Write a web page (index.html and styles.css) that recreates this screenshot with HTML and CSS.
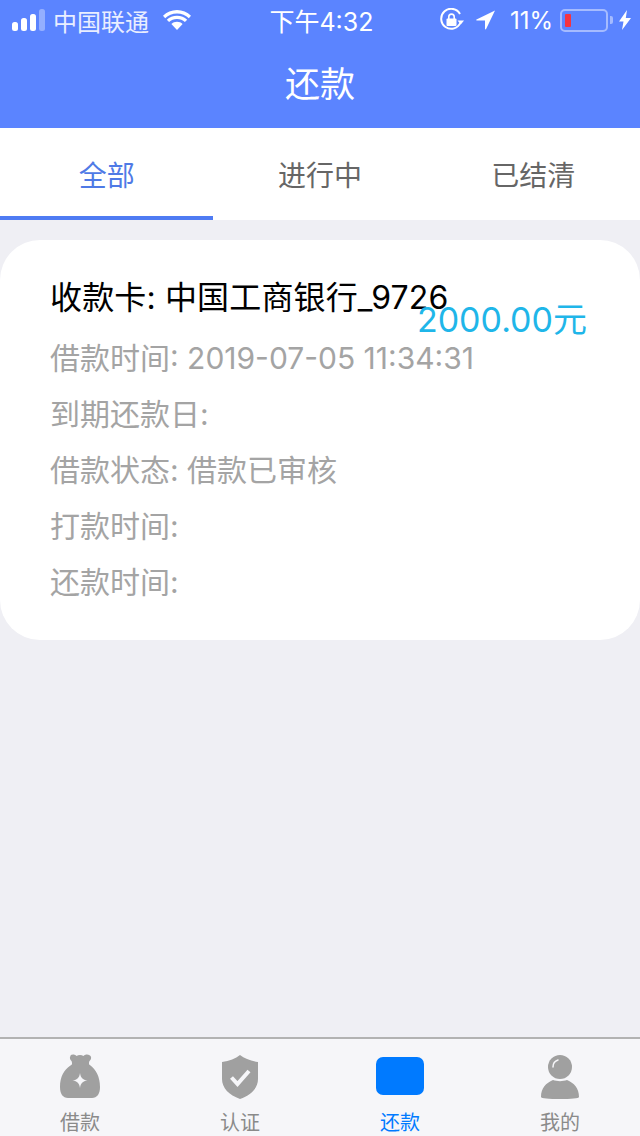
FILE: index.html
```html
<!DOCTYPE html>
<html lang="zh-CN">
<head>
  <meta charset="UTF-8" />
  <meta name="viewport" content="width=device-width, initial-scale=1" />
  <title>还款</title>
  <link rel="stylesheet" href="styles.css">
</head>
<body>
  <div class="page">
    <header class="header">
      <div class="status">
        <div class="status-side">
          <svg class="signal" width="34" height="22" viewBox="0 0 34 22">
            <rect x="0" y="13" width="6" height="9" rx="2.500" fill="#fff"/>
            <rect x="9" y="9" width="6" height="13" rx="2.500" fill="#fff"/>
            <rect x="18" y="5" width="6" height="17" rx="2.500" fill="#fff"/>
            <rect x="27" y="0" width="6" height="22" rx="2.500" fill="#fff" fill-opacity=".35"/>
          </svg>
          <span class="carrier">中国联通</span>
          <svg class="wifi" width="28" height="22" viewBox="0 0 28 22">
            <path d="M14 4.500c-4.600 0-8.700 1.800-11.800 4.700L0 6.800C3.700 3.200 8.600 1 14 1s10.300 2.200 14 5.800l-2.200 2.400C22.700 6.300 18.600 4.500 14 4.500z" fill="#fff"/>
            <path d="M14 10c-3.100 0-5.800 1.200-7.900 3.100l-2.300-2.400C6.500 8.100 10 6.700 14 6.700s7.500 1.400 10.200 4l-2.300 2.400C19.800 11.200 17.100 10 14 10z" fill="#fff"/>
            <path d="M14 12.800c2.200 0 4.100.8 5.600 2.200L14 21l-5.600-6c1.500-1.400 3.400-2.200 5.600-2.200z" fill="#fff"/>
          </svg>
        </div>
        <div class="status-time">下午4:32</div>
        <div class="status-side status-right">
          <svg class="lock" width="24" height="24" viewBox="0 0 24 24">
            <path d="M20.500 14.500A10 10 0 1 1 20 6" fill="none" stroke="#fff" stroke-width="2"/>
            <path d="M17.500 12.500h6.500l-3.200 4z" fill="#fff"/>
            <rect x="6.500" y="10.500" width="10" height="7.500" rx="1" fill="#fff"/>
            <path d="M8.800 11V8.800a2.700 2.700 0 0 1 5.400 0V11" fill="none" stroke="#fff" stroke-width="1.600"/>
          </svg>
          <svg class="arrow" width="20" height="20" viewBox="0 0 20 20">
            <path d="M19 0.500 0.500 9.500c-.6.400-.4 1.100.3 1.100H9v8.200c0 .7.800.9 1.100.3z" fill="#fff"/>
          </svg>
          <span class="battery-text">11%</span>
          <div class="battery">
            <div class="battery-body"><div class="battery-level"></div></div>
            <div class="battery-cap"></div>
          </div>
          <svg class="bolt" width="12" height="20" viewBox="0 0 12 20">
            <path d="M8 0 0 11.500h4.500L3 20l9-12H6.800z" fill="#fff"/>
          </svg>
        </div>
      </div>
      <h1 class="title">还款</h1>
    </header>

    <nav class="tabs">
      <div class="tab active">全部</div>
      <div class="tab">进行中</div>
      <div class="tab">已结清</div>
    </nav>

    <main class="content">
      <section class="card">
        <p class="card-title">收款卡: 中国工商银行_9726</p>
        <p class="card-line">借款时间: 2019-07-05 11:34:31</p>
        <p class="card-line">到期还款日:</p>
        <p class="card-line">借款状态: 借款已审核</p>
        <p class="card-line">打款时间:</p>
        <p class="card-line">还款时间:</p>
        <div class="amount">2000.00元</div>
      </section>
    </main>

    <footer class="tabbar">
      <div class="tabbar-item">
        <svg width="42" height="46" viewBox="0 0 42 46">
          <path d="M11 1.500c2.500-1.500 5-1 6.500.5 2-1.500 5-1.500 7 0 1.500-1.500 4-2 6.500-.5 1.500 1 1.500 3.500 0 5-.8.8-1 1.500-1 3 0 1 .5 1.500 1.500 2C37 15.500 41 23 41 33c0 7-3 11-8 11H9c-5 0-8-4-8-11 0-10 4-17.500 10.500-21.500 1-.5 1.500-1 1.500-2 0-1.500-.2-2.200-1-3-1.500-1.500-1.500-4 0-5z" fill="#a0a0a0"/>
          <path d="M21 19c.8 5 2.500 6.700 7.500 7.500-5 .8-6.700 2.500-7.500 7.500-.8-5-2.500-6.700-7.500-7.500 5-.8 6.700-2.500 7.500-7.500z" fill="#f6f6f9"/>
        </svg>
        <span>借款</span>
      </div>
      <div class="tabbar-item">
        <svg width="38" height="46" viewBox="0 0 38 46">
          <path d="M19 1c4.500 3.500 10.500 6 18 7v17c0 9-7 16-18 20C8 41 1 34 1 25V8c7.500-1 13.500-3.500 18-7z" fill="#a0a0a0"/>
          <path d="M10.500 23.500l6 6.500 11.500-13" fill="none" stroke="#f6f6f9" stroke-width="4"/>
        </svg>
        <span>认证</span>
      </div>
      <div class="tabbar-item active">
        <div class="tabbar-block"></div>
        <span>还款</span>
      </div>
      <div class="tabbar-item">
        <svg width="38" height="46" viewBox="0 0 38 46">
          <path d="M0 43c0-9 5-14 12-17 4 1.500 10 1.500 14 0 7 3 12 8 12 17 0 1.500-8 2-19 2S0 44.500 0 43z" fill="#a0a0a0"/>
          <circle cx="19" cy="13" r="12" fill="#a0a0a0"/>
          <path d="M12 13c0-3 2-6 5-7" fill="none" stroke="#f6f6f9" stroke-width="1.500" stroke-linecap="round"/>
        </svg>
        <span>我的</span>
      </div>
    </footer>
  </div>
</body>
</html>
```

FILE: styles.css
```css
* {
  box-sizing: border-box;
}
body {
  margin: 0;
  padding: 0;
  background: #efeff4;
  font-family: "Inter", "Noto Sans CJK SC", sans-serif;
}
.page {
  width: 640px;
  height: 1136px;
  display: flex;
  flex-direction: column;
  overflow: hidden;
}
.header {
  height: 128px;
  background: #5b84ff;
  color: white;
}
.status {
  height: 40px;
  padding: 0 9px 0 12px;
  display: grid;
  grid-template-columns: 1fr auto 1fr;
  align-items: center;
  font-size: 24px;
}
.status-side {
  display: flex;
  align-items: center;
}
.status-right {
  justify-content: flex-end;
}
.status-time {
  font-size: 25px;
}
.signal {
  margin-right: 7px;
}
.carrier {
  color: #e9eeff;
  margin-right: 14px;
}
.lock {
  margin-right: 12px;
}
.arrow {
  margin-right: 14px;
}
.battery-text {
  margin-right: 7px;
}
.battery {
  display: flex;
  align-items: center;
  margin-right: 6px;
}
.battery-body {
  width: 48px;
  height: 23px;
  padding: 3px;
  border: 2px solid rgba(255, 255, 255, 0.45);
  border-radius: 5px;
}
.battery-level {
  width: 6px;
  height: 100%;
  background: #f5333f;
  border-radius: 1px;
}
.battery-cap {
  width: 3px;
  height: 8px;
  margin-left: 2px;
  background: rgba(255, 255, 255, 0.45);
  border-radius: 0 2px 2px 0;
}
.title {
  margin: 0;
  height: 88px;
  line-height: 88px;
  text-align: center;
  font-size: 35px;
  font-weight: 400;
}
.tabs {
  height: 92px;
  background: white;
  display: flex;
}
.tab {
  flex: 1;
  line-height: 96px;
  text-align: center;
  font-size: 28px;
  color: #666;
}
.tab.active {
  color: #4f7ae6;
  border-bottom: 4px solid #4f7bf3;
}
.content {
  flex: 1;
  padding-top: 20px;
}
.card {
  position: relative;
  height: 400px;
  padding: 30px 50px 0;
  background: white;
  border-radius: 40px;
}
.card-title,
.card-line {
  margin: 0;
  height: 56px;
  line-height: 56px;
  white-space: nowrap;
}
.card-title {
  margin-bottom: 4px;
  font-size: 32px;
  letter-spacing: 0.15px;
  color: #000;
}
.card-line {
  font-size: 30px;
  color: #a4a4a4;
}
.amount {
  position: absolute;
  top: 56px;
  right: 53px;
  font-size: 34px;
  line-height: 48px;
  color: #1fb6e9;
}
.tabbar {
  height: 99px;
  background: #f6f6f9;
  border-top: 2px solid #b2b2b2;
  display: flex;
}
.tabbar-item {
  flex: 1;
  display: flex;
  flex-direction: column;
  align-items: center;
  padding-top: 15px;
  font-size: 20px;
  color: #8a8a8a;
}
.tabbar-item svg,
.tabbar-block {
  flex: none;
  height: 46px;
}
.tabbar-item span {
  margin-top: 9px;
  line-height: 28px;
}
.tabbar-item.active {
  color: #007aff;
}
.tabbar-block {
  width: 48px;
  height: 38px;
  margin: 3px 0 5px;
  background: #007aff;
  border-radius: 7px;
}
```
